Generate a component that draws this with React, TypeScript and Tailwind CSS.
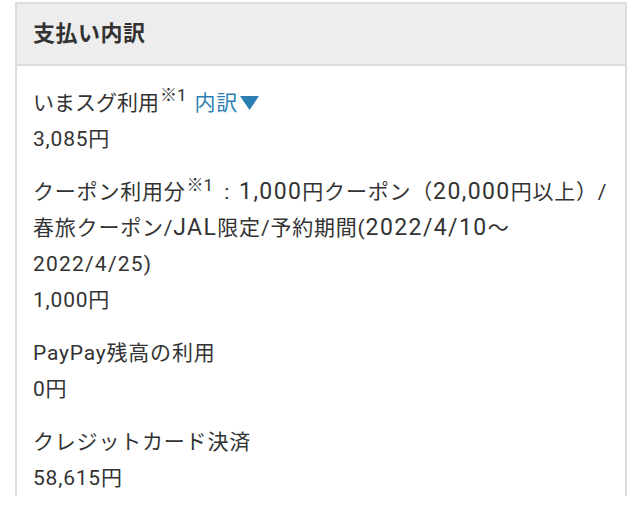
import React from "react";

const font = { fontFamily: "Roboto, 'Noto Sans CJK JP', sans-serif" };

function Sup() {
  return (
    <span className="text-[17px] tracking-normal relative -top-[8px] ml-[1px] mr-[2px] leading-none">
      ※1
    </span>
  );
}

function N({ children }: { children: React.ReactNode }) {
  return <span className="text-[23px] tracking-[1.4px]">{children}</span>;
}

export default function App() {
  return (
    <div className="w-[640px] h-[508px] bg-white overflow-hidden pt-[2px]" style={font}>
      <div className="ml-[15px] w-[612px] border-2 border-b-0 border-[#dddddd] text-[#333333]">
        <div className="h-[62px] bg-[#ededed] border-b-2 border-[#dddddd] flex items-center pl-[16px]">
          <h2 className="text-[22px] font-bold leading-none tracking-[0.5px]">支払い内訳</h2>
        </div>
        <div className="pl-[16px] pr-[2px] pt-[19px] text-[21px] tracking-[0.8px] leading-[36px] flex flex-col gap-[17px]">
          <div>
            <div className="flex items-center">
              <span className="tracking-[0px]">いまスグ利用</span>
              <Sup />
              <span className="ml-[6px] text-[#2d7fb3]">内訳</span>
              <svg width="19" height="14" viewBox="0 0 19 14" className="ml-[2px]">
                <path d="M0 0 H19 L9.5 14 Z" fill="#2d7fb3" />
              </svg>
            </div>
            <div>3,085円</div>
          </div>
          <div>
            <div>
              クーポン利用分<Sup />
              <span className="mx-[9px]">:</span>
              <N>1,000</N>円クーポン（<N>20,000</N>円以上）/
              <br />
              春旅クーポン/<N>JAL</N>限定/予約期間(<N>2022/4/10</N>～
              <br />
              <span className="tracking-[1.2px]">2022/4/25)</span>
            </div>
            <div>1,000円</div>
          </div>
          <div>
            <div>PayPay残高の利用</div>
            <div>0円</div>
          </div>
          <div>
            <div>クレジットカード決済</div>
            <div>58,615円</div>
          </div>
        </div>
      </div>
    </div>
  );
}
